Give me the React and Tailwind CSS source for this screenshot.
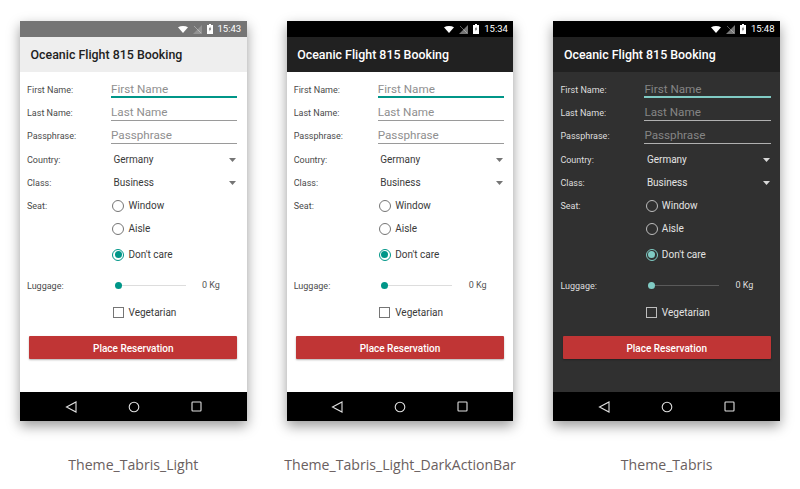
import React from 'react';

const themes = [
  {
    name: 'Theme_Tabris_Light',
    time: '15:43',
    status: 'bg-[#757575]',
    toolbar: 'bg-[#eeeeee] text-[#212121]',
    body: 'bg-white',
    label: 'text-[#4a4a4a]',
    text: 'text-[#3a3a3a]',
    hint: 'text-[#8f8f8f]',
    line: 'bg-[#9a9a9a]',
    focus: 'bg-[#009688]',
    arrow: '#757575',
    ring: 'border-[#757575]',
    accentBorder: 'border-[#009688]',
    accentBg: 'bg-[#009688]',
    track: 'bg-[#dddddd]',
    box: 'border-[#757575]',
    value: 'text-[#555555]',
  },
  {
    name: 'Theme_Tabris_Light_DarkActionBar',
    time: '15:34',
    status: 'bg-black',
    toolbar: 'bg-[#212121] text-white',
    body: 'bg-white',
    label: 'text-[#4a4a4a]',
    text: 'text-[#3a3a3a]',
    hint: 'text-[#8f8f8f]',
    line: 'bg-[#9a9a9a]',
    focus: 'bg-[#009688]',
    arrow: '#757575',
    ring: 'border-[#757575]',
    accentBorder: 'border-[#009688]',
    accentBg: 'bg-[#009688]',
    track: 'bg-[#dddddd]',
    box: 'border-[#757575]',
    value: 'text-[#555555]',
  },
  {
    name: 'Theme_Tabris',
    time: '15:48',
    status: 'bg-black',
    toolbar: 'bg-[#212121] text-white',
    body: 'bg-[#303030]',
    label: 'text-[#dedede]',
    text: 'text-[#e4e4e4]',
    hint: 'text-[#858585]',
    line: 'bg-[#b0b0b0]',
    focus: 'bg-[#80cbc4]',
    arrow: '#d8d8d8',
    ring: 'border-[#bdbdbd]',
    accentBorder: 'border-[#80cbc4]',
    accentBg: 'bg-[#80cbc4]',
    track: 'bg-[#5a5a5a]',
    box: 'border-[#bdbdbd]',
    value: 'text-[#dedede]',
  },
];

const Row = ({ label, t, className = 'h-[23px]', children }) => (
  <div className={`flex items-center ${className}`}>
    <div className={`w-[91px] shrink-0 pl-[7px] pt-[1.5px] text-[9px] ${t.label}`}>{label}</div>
    <div className="flex-1 min-w-0 h-full">{children}</div>
  </div>
);

const TextField = ({ hint, t, focused }) => (
  <div className="relative h-full mr-[9.4px] flex items-center">
    <span className={`text-[11.7px] ${t.hint}`}>{hint}</span>
    <div className={`absolute left-0 right-0 bottom-[3px] ${focused ? `h-[2px] ${t.focus}` : `h-px ${t.line}`}`} />
  </div>
);

const Select = ({ value, t }) => (
  <div className="h-full mr-[9.4px] pl-[2.5px] flex items-center justify-between">
    <span className={`text-[10px] ${t.text}`}>{value}</span>
    <svg width="7" height="4" viewBox="0 0 7 4" className="mr-px">
      <path d="M0 0h7L3.5 4z" fill={t.arrow} />
    </svg>
  </div>
);

const Radio = ({ label, t, checked }) => (
  <div className="h-full flex items-center pl-[1.3px]">
    <div className={`w-[12px] h-[12px] rounded-full border flex items-center justify-center ${checked ? t.accentBorder : t.ring}`}>
      {checked && <div className={`w-[7px] h-[7px] rounded-full ${t.accentBg}`} />}
    </div>
    <span className={`ml-[4.2px] text-[10px] ${t.text}`}>{label}</span>
  </div>
);

const Phone = ({ t }) => (
  <div className="w-[226.7px] shrink-0">
    <div className="h-[400px] flex flex-col shadow-[0_5px_12px_rgba(0,0,0,0.4)]">
      <div className={`h-[16px] flex items-center justify-end pr-[5.5px] gap-[4px] ${t.status}`}>
        <svg width="10" height="7" viewBox="0 0 10 7">
          <path d="M0 1.2C3-.4 7-.4 10 1.2L5 7z" fill="#fff" />
        </svg>
        <svg width="9" height="9" viewBox="0 0 9 9" className="ml-[1px]">
          <path d="M9 0v9H0z" fill="#9e9e9e" opacity="0.75" />
          <path d="M1 1l7 7" stroke="#fff" strokeWidth="0.7" opacity="0.5" />
        </svg>
        <svg width="6" height="10" viewBox="0 0 6 10" className="ml-[1px]">
          <path d="M2 0h2v1h2v9H0V1h2z" fill="#fff" />
          <path d="M3.4 2.5L1.8 5.6h1l-.3 2 1.7-3h-1z" fill="#555" />
        </svg>
        <span className="ml-px text-[9.5px] text-white leading-none">{t.time}</span>
      </div>
      <div className={`h-[35px] pl-[10.5px] pt-[1px] flex items-center text-[12.4px] font-medium ${t.toolbar}`}>
        Oceanic Flight 815 Booking
      </div>
      <div className={`flex-1 pt-[6px] ${t.body}`}>
        <Row label="First Name:" t={t}><TextField hint="First Name" t={t} focused /></Row>
        <Row label="Last Name:" t={t}><TextField hint="Last Name" t={t} /></Row>
        <Row label="Passphrase:" t={t}><TextField hint="Passphrase" t={t} /></Row>
        <Row label="Country:" t={t} className="h-[23px] mt-[1px]"><Select value="Germany" t={t} /></Row>
        <Row label="Class:" t={t}><Select value="Business" t={t} /></Row>
        <Row label="Seat:" t={t}><Radio label="Window" t={t} /></Row>
        <Row label="" t={t}><Radio label="Aisle" t={t} /></Row>
        <Row label="" t={t} className="h-[23px] mt-[3px]"><Radio label="Don't care" t={t} checked /></Row>
        <Row label="Luggage:" t={t} className="h-[23px] mt-[8px]">
          <div className="h-full flex items-center pl-[3.5px]">
            <div className="relative w-[71px] h-full flex items-center">
              <div className={`w-full h-px ${t.track}`} />
              <div className={`absolute left-0 top-[8px] w-[7px] h-[7px] rounded-full ${t.accentBg}`} />
            </div>
            <span className={`ml-[16.5px] text-[9px] ${t.value}`}>0 Kg</span>
          </div>
        </Row>
        <Row label="" t={t} className="h-[23px] mt-[4px]">
          <div className="h-full flex items-center pl-[1.8px]">
            <div className={`w-[11px] h-[11px] border ${t.box}`} />
            <span className={`ml-[4.7px] text-[10px] ${t.text}`}>Vegetarian</span>
          </div>
        </Row>
        <div className="mt-[12px] ml-[9.3px] mr-[9.4px] h-[23px] pt-[1px] bg-[#c03535] rounded-[1px] shadow-[0_1px_2px_rgba(0,0,0,0.3)] flex items-center justify-center text-[10px] font-medium text-white">
          Place Reservation
        </div>
      </div>
      <div className="h-[29px] bg-black flex items-center pl-[44.5px]">
        <svg width="12" height="12" viewBox="0 0 12 12" fill="none" stroke="#e0e0e0" strokeWidth="1.1">
          <path d="M11 1v10L1.5 6z" />
        </svg>
        <svg width="12" height="12" viewBox="0 0 12 12" fill="none" stroke="#e0e0e0" strokeWidth="1.1" className="ml-[51px]">
          <circle cx="6" cy="6" r="4.8" />
        </svg>
        <svg width="11" height="11" viewBox="0 0 11 11" fill="none" stroke="#e0e0e0" strokeWidth="1.1" className="ml-[51.3px]">
          <rect x="1" y="1" width="9" height="9" rx="0.7" />
        </svg>
      </div>
    </div>
    <div className="mt-[33px] flex justify-center whitespace-nowrap text-[14.1px] text-[#6a6060] font-['Open_Sans',sans-serif]">
      {t.name}
    </div>
  </div>
);

const App = () => (
  <div className="w-[800px] h-[489px] overflow-hidden bg-white pt-[21px] pl-[20px] flex gap-[40px] font-['Roboto',sans-serif]">
    {themes.map((t) => <Phone key={t.name} t={t} />)}
  </div>
);

export default App;
